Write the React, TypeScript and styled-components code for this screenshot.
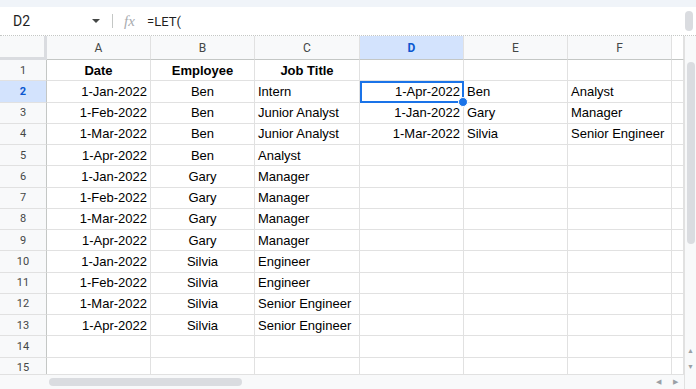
import React from "react";
import styled, { createGlobalStyle } from "styled-components";

const GlobalStyle = createGlobalStyle`
  html, body { margin: 0; padding: 0; background: #fff; }
  body { font-family: Roboto, "Liberation Sans", Arial, sans-serif; }
`;

type Align = "left" | "center" | "right";

const COLS = ["A", "B", "C", "D", "E", "F"];
const WIDTHS = [104, 104, 105, 104, 104, 104];
const ALIGN: Align[] = ["right", "center", "left", "right", "left", "left"];

const rows: string[][] = [
  ["Date", "Employee", "Job Title", "", "", ""],
  ["1-Jan-2022", "Ben", "Intern", "1-Apr-2022", "Ben", "Analyst"],
  ["1-Feb-2022", "Ben", "Junior Analyst", "1-Jan-2022", "Gary", "Manager"],
  ["1-Mar-2022", "Ben", "Junior Analyst", "1-Mar-2022", "Silvia", "Senior Engineer"],
  ["1-Apr-2022", "Ben", "Analyst", "", "", ""],
  ["1-Jan-2022", "Gary", "Manager", "", "", ""],
  ["1-Feb-2022", "Gary", "Manager", "", "", ""],
  ["1-Mar-2022", "Gary", "Manager", "", "", ""],
  ["1-Apr-2022", "Gary", "Manager", "", "", ""],
  ["1-Jan-2022", "Silvia", "Engineer", "", "", ""],
  ["1-Feb-2022", "Silvia", "Engineer", "", "", ""],
  ["1-Mar-2022", "Silvia", "Senior Engineer", "", "", ""],
  ["1-Apr-2022", "Silvia", "Senior Engineer", "", "", ""],
  ["", "", "", "", "", ""],
  ["", "", "", "", "", ""],
];

const Page = styled.div`
  width: 696px;
  height: 389px;
  overflow: hidden;
  display: flex;
  flex-direction: column;
  background: #fff;
`;

const TopStrip = styled.div`
  height: 7px;
  flex: none;
  background: #f0f4f9;
`;

const FormulaBar = styled.div`
  height: 28px;
  flex: none;
  display: flex;
  align-items: center;
  border-bottom: 1px dotted #c4c7c5;
  position: relative;
`;

const NameBox = styled.div`
  width: 79px;
  padding-left: 13px;
  font-size: 14px;
  color: #1f1f1f;
`;

const Caret = styled.div`
  width: 0;
  height: 0;
  border-left: 4px solid transparent;
  border-right: 4px solid transparent;
  border-top: 4px solid #444746;
`;

const Divider = styled.div`
  width: 1px;
  height: 14px;
  background: #c4c7c5;
  margin: 0 11px 0 12px;
`;

const Fx = styled.span`
  font-family: "Liberation Serif", serif;
  font-style: italic;
  font-size: 15px;
  color: #a8abaf;
  width: 23px;
`;

const Formula = styled.span`
  font-size: 13px;
  color: #1f1f1f;
`;

const MiniThumb = styled.div`
  position: absolute;
  right: 3px;
  top: 4px;
  width: 8px;
  height: 20px;
  border-radius: 4px;
  background: #dadce0;
`;

const Body = styled.div`
  flex: 1;
  display: flex;
  min-height: 0;
`;

const Sheet = styled.div`
  width: 684px;
  display: flex;
  flex-direction: column;
`;

const Rows = styled.div`
  flex: 1;
  min-height: 0;
  overflow: hidden;
  display: flex;
  flex-direction: column;
`;

const Row = styled.div<{ $h: number }>`
  display: flex;
  flex: none;
  height: ${(p) => p.$h}px;
`;

const Corner = styled.div`
  width: 47px;
  box-sizing: border-box;
  background: #f8f9fa;
  border-right: 3px solid #dadce0;
  border-bottom: 3px solid #dadce0;
  flex: none;
`;

const RowHead = styled.div<{ $sel?: boolean }>`
  width: 47px;
  flex: none;
  box-sizing: border-box;
  background: ${(p) => (p.$sel ? "#d3e3fd" : "#f8f9fa")};
  border-right: 1px solid #c4c7c5;
  border-bottom: 1px solid #e1e1e1;
  display: flex;
  align-items: center;
  justify-content: center;
  font-size: 11px;
  color: ${(p) => (p.$sel ? "#0b57d0" : "#444746")};
  font-weight: ${(p) => (p.$sel ? 700 : 400)};
`;

const ColHead = styled.div<{ $w: number; $sel?: boolean }>`
  width: ${(p) => p.$w}px;
  flex: none;
  box-sizing: border-box;
  background: ${(p) => (p.$sel ? "#d3e3fd" : "#f8f9fa")};
  border-right: 1px solid #e1e1e1;
  border-bottom: 1px solid #c4c7c5;
  display: flex;
  align-items: center;
  justify-content: center;
  font-size: 12px;
  color: ${(p) => (p.$sel ? "#0b57d0" : "#444746")};
  font-weight: ${(p) => (p.$sel ? 700 : 400)};
`;

const Cell = styled.div<{ $w: number; $align: Align; $bold?: boolean; $active?: boolean }>`
  width: ${(p) => p.$w}px;
  flex: none;
  box-sizing: border-box;
  border-right: 1px solid #e1e1e1;
  border-bottom: 1px solid #e1e1e1;
  padding: 0 3px;
  display: flex;
  align-items: center;
  justify-content: ${(p) =>
    p.$align === "right" ? "flex-end" : p.$align === "center" ? "center" : "flex-start"};
  font-family: "Liberation Sans", Arial, sans-serif;
  font-size: 13px;
  font-weight: ${(p) => (p.$bold ? 700 : 400)};
  color: #000;
  white-space: nowrap;
  position: relative;
  ${(p) =>
    p.$active &&
    `
    outline: 2px solid #1a73e8;
    outline-offset: -2px;
    z-index: 2;
  `}
`;

const Handle = styled.div`
  position: absolute;
  right: -5px;
  bottom: -5px;
  width: 8px;
  height: 8px;
  border-radius: 50%;
  background: #1a73e8;
  border: 1px solid #fff;
`;

const Spacer = styled.div<{ $head?: boolean }>`
  width: 12px;
  flex: none;
  box-sizing: border-box;
  border-bottom: 1px solid ${(p) => (p.$head ? "#c4c7c5" : "#e1e1e1")};
  border-right: 1px solid #e1e1e1;
  background: #fff;
`;

const HScroll = styled.div`
  height: 15px;
  flex: none;
  display: flex;
  align-items: center;
  background: #f8f9fa;
  border-top: 1px solid #e1e1e1;
  box-sizing: border-box;
  position: relative;
`;

const HThumb = styled.div`
  margin-left: 49px;
  width: 193px;
  height: 8px;
  border-radius: 4px;
  background: #dadce0;
`;

const Arrows = styled.div`
  position: absolute;
  right: 6px;
  top: 3px;
  display: flex;
  gap: 12px;
  color: #9aa0a6;
  font-size: 7px;
`;

const VScroll = styled.div`
  width: 12px;
  flex: none;
  display: flex;
  flex-direction: column;
  align-items: center;
  background: #f8f9fa;
  border-left: 1px solid #e1e1e1;
  box-sizing: border-box;
`;

const VThumb = styled.div`
  margin-top: 26px;
  width: 8px;
  height: 182px;
  border-radius: 4px;
  background: #dadce0;
`;

const VArrow = styled.div`
  color: #9aa0a6;
  font-size: 7px;
  line-height: 16px;
`;

const VGap = styled.div`
  flex: 1;
`;

const VFoot = styled.div`
  height: 14px;
`;

const App = () => {
  return (
    <Page>
      <GlobalStyle />
      <TopStrip />
      <FormulaBar>
        <NameBox>D2</NameBox>
        <Caret />
        <Divider />
        <Fx>fx</Fx>
        <Formula>=LET(</Formula>
        <MiniThumb />
      </FormulaBar>
      <Body>
        <Sheet>
          <Rows>
            <Row $h={24}>
              <Corner />
              {COLS.map((c, i) => (
                <ColHead key={c} $w={WIDTHS[i]} $sel={c === "D"}>
                  {c}
                </ColHead>
              ))}
              <Spacer $head />
            </Row>
            {rows.map((r, ri) => (
              <Row key={ri} $h={21.25}>
                <RowHead $sel={ri === 1}>{ri + 1}</RowHead>
                {r.map((v, ci) => {
                  const active = ri === 1 && ci === 3;
                  return (
                    <Cell
                      key={ci}
                      $w={WIDTHS[ci]}
                      $align={ri === 0 ? "center" : ALIGN[ci]}
                      $bold={ri === 0}
                      $active={active}
                    >
                      {v}
                      {active && <Handle />}
                    </Cell>
                  );
                })}
                <Spacer />
              </Row>
            ))}
          </Rows>
          <HScroll>
            <HThumb />
            <Arrows>
              <span>◀</span>
              <span>▶</span>
            </Arrows>
          </HScroll>
        </Sheet>
        <VScroll>
          <VThumb />
          <VGap />
          <VArrow>▲</VArrow>
          <VArrow>▼</VArrow>
          <VFoot />
        </VScroll>
      </Body>
    </Page>
  );
};

export default App;
